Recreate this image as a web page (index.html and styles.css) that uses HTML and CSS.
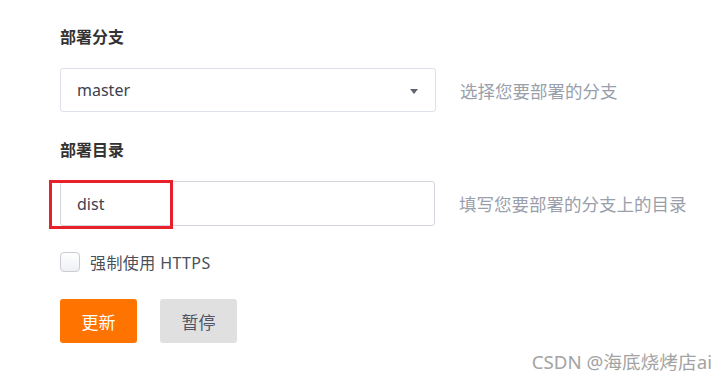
FILE: index.html
```html
<!DOCTYPE html>
<html lang="zh-CN">
    <head>
        <meta charset="UTF-8" />
        <title>部署设置</title>
        <link rel="stylesheet" href="styles.css">
    </head>
    <body>
        <div class="form">
            <div class="label">部署分支</div>
            <div class="row">
                <div class="select">
                    <span>master</span>
                    <span class="caret"></span>
                </div>
                <div class="hint">选择您要部署的分支</div>
            </div>

            <div class="label label-2">部署目录</div>
            <div class="row">
                <div class="field">
                    <input class="input" type="text" value="dist" />
                    <div class="mark"></div>
                </div>
                <div class="hint">填写您要部署的分支上的目录</div>
            </div>

            <label class="check">
                <span class="box"></span>
                <span>强制使用 HTTPS</span>
            </label>

            <div class="actions">
                <button class="btn btn-primary">更新</button>
                <button class="btn btn-gray">暂停</button>
            </div>
        </div>
        <div class="watermark">CSDN @海底烧烤店ai</div>
    </body>
</html>
```

FILE: styles.css
```css
body {
    margin: 0;
    background: #fff;
    font-family: "Noto Sans", "Noto Sans CJK SC", sans-serif;
    color: #333;
    width: 728px;
    height: 382px;
    position: relative;
    overflow: hidden;
}
.form {
    padding: 26px 0 0 60px;
}
.label {
    font-size: 16px;
    line-height: 22px;
    font-weight: bold;
    color: #333;
}
.label-2 {
    margin-top: 27px;
}
.row {
    display: flex;
    align-items: center;
    margin-top: 20px;
}
.select {
    width: 376px;
    height: 44px;
    box-sizing: border-box;
    border: 1px solid #dde1e8;
    border-radius: 3px;
    display: flex;
    align-items: center;
    justify-content: space-between;
    padding: 0 17px 0 16px;
    font-size: 16px;
    color: #3d4250;
}
.caret {
    width: 0;
    height: 0;
    border-left: 4px solid transparent;
    border-right: 4px solid transparent;
    border-top: 5px solid #5f6470;
    margin-top: 2px;
}
.hint {
    margin-left: 24px;
    font-size: 17.5px;
    color: #9a9fab;
}
.field {
    position: relative;
}
.input {
    display: block;
    width: 375px;
    height: 45px;
    box-sizing: border-box;
    border: 1px solid #d3d6de;
    border-radius: 3px;
    padding: 0 16px;
    font-family: inherit;
    font-size: 16px;
    color: #3d4250;
    outline: none;
}
.mark {
    position: absolute;
    left: -11px;
    top: -1px;
    width: 124px;
    height: 49px;
    box-sizing: border-box;
    border: 3px solid #e8202a;
}
.check {
    display: flex;
    align-items: center;
    margin-top: 24px;
    font-size: 16px;
    color: #4a4f5a;
}
.check span + span {
    letter-spacing: 0.4px;
}
.box {
    width: 20px;
    height: 20px;
    box-sizing: border-box;
    border: 1px solid #c9ccd3;
    border-radius: 4px;
    background: linear-gradient(#fff, #eef0f4);
    margin-right: 10px;
}
.actions {
    display: flex;
    gap: 23px;
    margin-top: 25px;
}
.btn {
    width: 77px;
    height: 44px;
    border: none;
    border-radius: 3px;
    font-family: inherit;
    font-size: 17px;
}
.btn-primary {
    background: #ff7300;
    color: #fff;
}
.btn-gray {
    background: #e0e0e0;
    color: #4f5565;
}
.watermark {
    position: absolute;
    right: 16px;
    bottom: 8px;
    font-size: 18.7px;
    color: #a3a3a3;
}
```
